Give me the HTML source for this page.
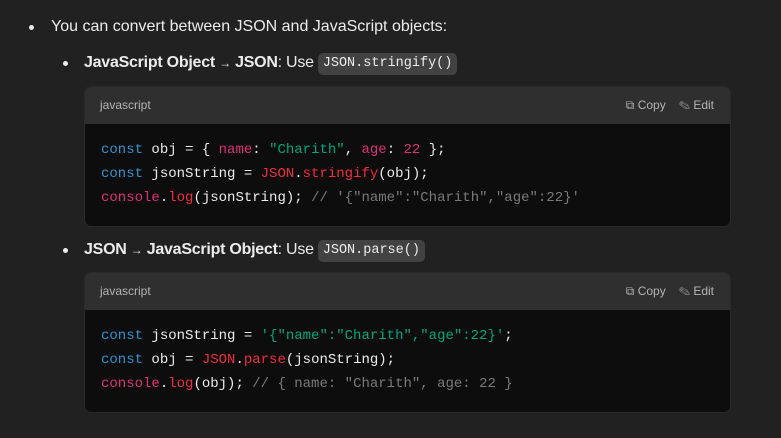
<!DOCTYPE html>
<html><head><meta charset="utf-8"><style>
*{margin:0;padding:0;box-sizing:border-box}
body{width:781px;height:438px;background:#212121;color:#ececec;font-family:"Liberation Sans",sans-serif;font-size:16px;position:relative;overflow:hidden}
.abs{position:absolute;white-space:nowrap}
.dot{position:absolute;width:5px;height:5px;border-radius:50%;background:#ececec}
.sub{letter-spacing:-0.25px}
.ar{font-size:12px}
.ic{display:inline-block;background:#424242;border-radius:5px;font-family:"Liberation Mono",monospace;font-size:13.5px;padding:0 5px;height:22px;line-height:22px;color:#ececec;letter-spacing:0;margin-left:4px;vertical-align:1px}
.blk{position:absolute;left:84px;width:647px;height:141px;border-radius:7px;background:#0d0d0d;overflow:hidden;border:1px solid #2a2a2a}
.hd{height:37px;background:#2f2f2f;position:relative;font-size:12px;color:#b4b4b4}
.hd .l{position:absolute;left:15px;top:11px}
.hd .r{position:absolute;right:16px;top:11px}
.code{font-family:"Liberation Mono",monospace;font-size:14px;line-height:24px;padding:14px 0 0 16px;color:#ececec;white-space:pre}
.k{color:#2e95d3}.p{color:#df3079}.s{color:#00a67d}.r1{color:#f22c3d}.c{color:#7a7a7a}
</style></head><body>
<div class="dot" style="left:29px;top:25px"></div>
<div class="abs" style="left:51px;top:18px">You can convert between JSON and JavaScript objects:</div>

<div class="dot" style="left:63px;top:61px"></div>
<div class="abs sub" style="left:84px;top:53px"><b>JavaScript Object</b> <span class="ar">→</span> <b>JSON</b>: Use<span class="ic">JSON.stringify()</span></div>

<div class="blk" style="top:86px">
<div class="hd"><span class="l">javascript</span><span class="r">⧉ Copy &nbsp;&nbsp; ✎ Edit</span></div>
<div class="code"><span class="k">const</span> obj = { <span class="p">name</span>: <span class="s">"Charith"</span>, <span class="p">age</span>: <span class="p">22</span> };
<span class="k">const</span> jsonString = <span class="r1">JSON</span>.<span class="r1">stringify</span>(obj);
<span class="p">console</span>.<span class="r1">log</span>(jsonString); <span class="c">// '{"name":"Charith","age":22}'</span></div>
</div>

<div class="dot" style="left:63px;top:248px"></div>
<div class="abs sub" style="left:84px;top:240px"><b>JSON</b> <span class="ar">→</span> <b>JavaScript Object</b>: Use<span class="ic">JSON.parse()</span></div>

<div class="blk" style="top:272px">
<div class="hd"><span class="l">javascript</span><span class="r">⧉ Copy &nbsp;&nbsp; ✎ Edit</span></div>
<div class="code"><span class="k">const</span> jsonString = <span class="s">'{"name":"Charith","age":22}'</span>;
<span class="k">const</span> obj = <span class="r1">JSON</span>.<span class="r1">parse</span>(jsonString);
<span class="p">console</span>.<span class="r1">log</span>(obj); <span class="c">// { name: "Charith", age: 22 }</span></div>
</div>
</body></html>
